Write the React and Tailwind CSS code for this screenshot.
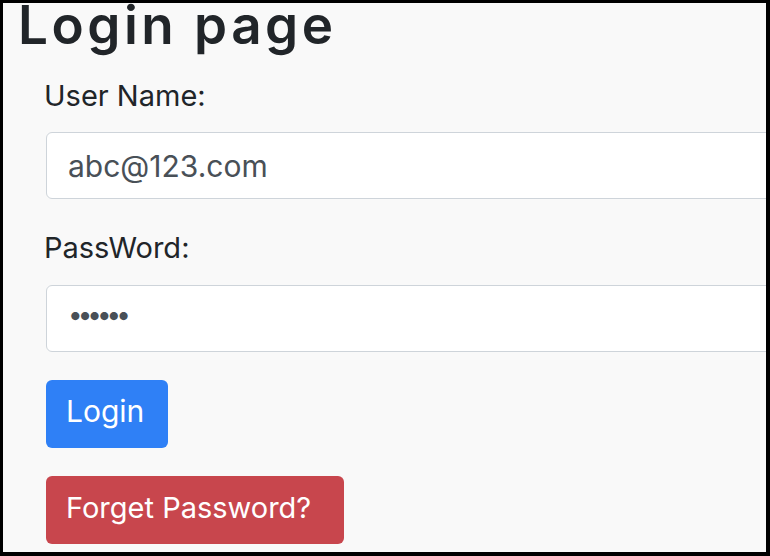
export default function App() {
  const font = { fontFamily: "Inter, 'Noto Sans', sans-serif" };
  return (
    <div
      className="w-[770px] h-[556px] overflow-hidden bg-[#f9f9f9] border-black border-l-[3px] border-t-[3px] border-r-4 border-b-4"
      style={font}
    >
      <h1 className="pl-[15px] text-[53px] leading-[44px] font-semibold text-[#212529] tracking-[3.5px]">
        Login page
      </h1>
      <form className="pl-[43px] flex flex-col items-start" onSubmit={(e) => e.preventDefault()}>
        <label className="mt-[34px] -ml-[2px] text-[29px] leading-[29px] text-[#212529]">
          User Name:
        </label>
        <input
          readOnly
          value="abc@123.com"
          className="mt-[22px] w-[760px] h-[67px] pl-[21px] bg-white border border-[#ced4da] rounded-[6px] text-[30px] text-[#495057] outline-none"
          style={font}
        />
        <label className="mt-[34px] -ml-[2px] text-[29px] leading-[29px] text-[#212529]">
          PassWord:
        </label>
        <input
          readOnly
          type="password"
          value="123456"
          className="mt-[23px] w-[760px] h-[67px] pl-[21px] pb-[8px] bg-white border border-[#ced4da] rounded-[6px] text-[26px] tracking-[-5px] text-[#495057] outline-none"
          style={font}
        />
        <button
          type="submit"
          className="mt-[28px] w-[122px] h-[68px] pl-[20px] pb-[5px] flex items-center rounded-[6px] bg-[#2f80f6] text-white text-[30px]"
        >
          Login
        </button>
        <button
          type="button"
          className="mt-[28px] w-[298px] h-[68px] pl-[20px] pb-[5px] flex items-center rounded-[6px] bg-[#c8464d] text-white text-[29px]"
        >
          Forget Password?
        </button>
      </form>
    </div>
  );
}
